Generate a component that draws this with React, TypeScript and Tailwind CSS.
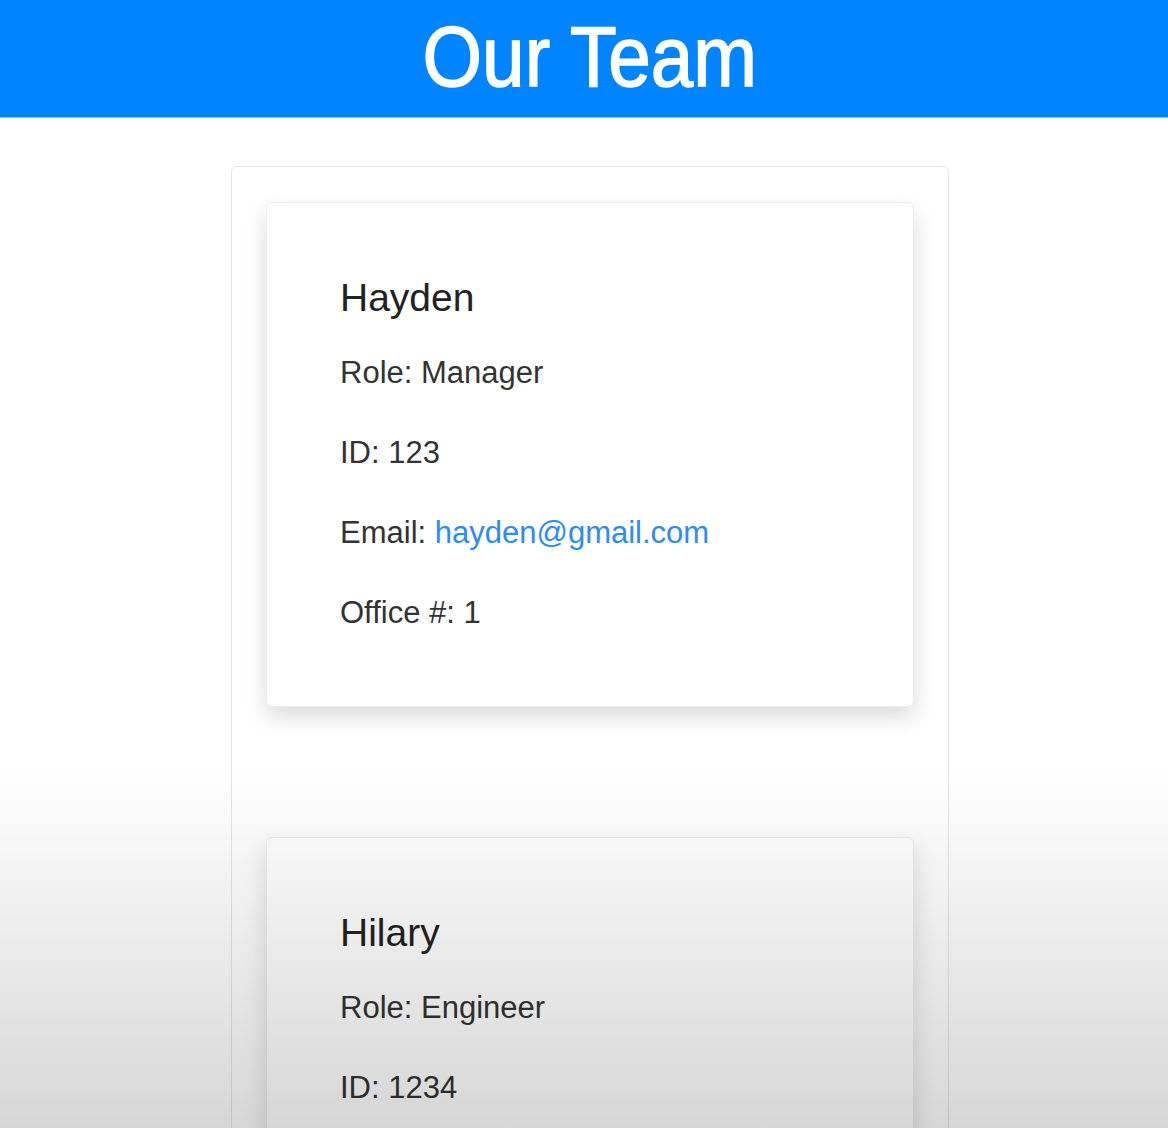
type Member = {
    name: string
    role: string
    id: string
    email?: string
    office?: string
}

const team: Member[] = [
    { name: "Hayden", role: "Manager", id: "123", email: "hayden@gmail.com", office: "1" },
    { name: "Hilary", role: "Engineer", id: "1234", email: "hilary@gmail.com" },
]

function Card({ member }: { member: Member }) {
    return (
        <div className="w-[648px] rounded-[6px] border border-[#ececec] bg-white pl-[73px] pr-10 pt-[71px] pb-[69px] shadow-[0_10px_22px_rgba(0,0,0,0.14)]">
            <h5 className="text-[39px] leading-[48px] text-[#222]">{member.name}</h5>
            <div className="mt-[27px] flex flex-col gap-8 text-[31px] leading-[48px] text-[#333]">
                <p>Role: {member.role}</p>
                <p>ID: {member.id}</p>
                {member.email && (
                    <p>
                        Email: <a href={`mailto:${member.email}`} className="text-[#2b8cf3]">{member.email}</a>
                    </p>
                )}
                {member.office && <p>Office #: {member.office}</p>}
            </div>
        </div>
    )
}

export default function App() {
    return (
        <div className="relative h-[1128px] overflow-hidden bg-white font-['Liberation_Sans',Arial,sans-serif]">
            <header className="flex h-[118px] items-center justify-center border-b border-[#8cc6ff] bg-[#0084ff] pl-3">
                <h1 className="inline-block scale-x-[0.9] pb-1 text-[85px] leading-none text-white [-webkit-text-stroke:1.5px_white]">Our Team</h1>
            </header>

            <main className="flex justify-center pl-3 pt-12">
                <div className="flex w-[718px] flex-col items-center gap-[130px] rounded-[6px] border border-[#e6e6e6] px-[34px] pt-[35px] pb-10">
                    {team.map((member) => (
                        <Card key={member.id} member={member} />
                    ))}
                </div>
            </main>

            {/* video frame darkening at the bottom */}
            <div className="pointer-events-none absolute inset-x-0 bottom-0 h-[360px] bg-linear-to-b from-transparent to-black/[0.16]" />
        </div>
    )
}
